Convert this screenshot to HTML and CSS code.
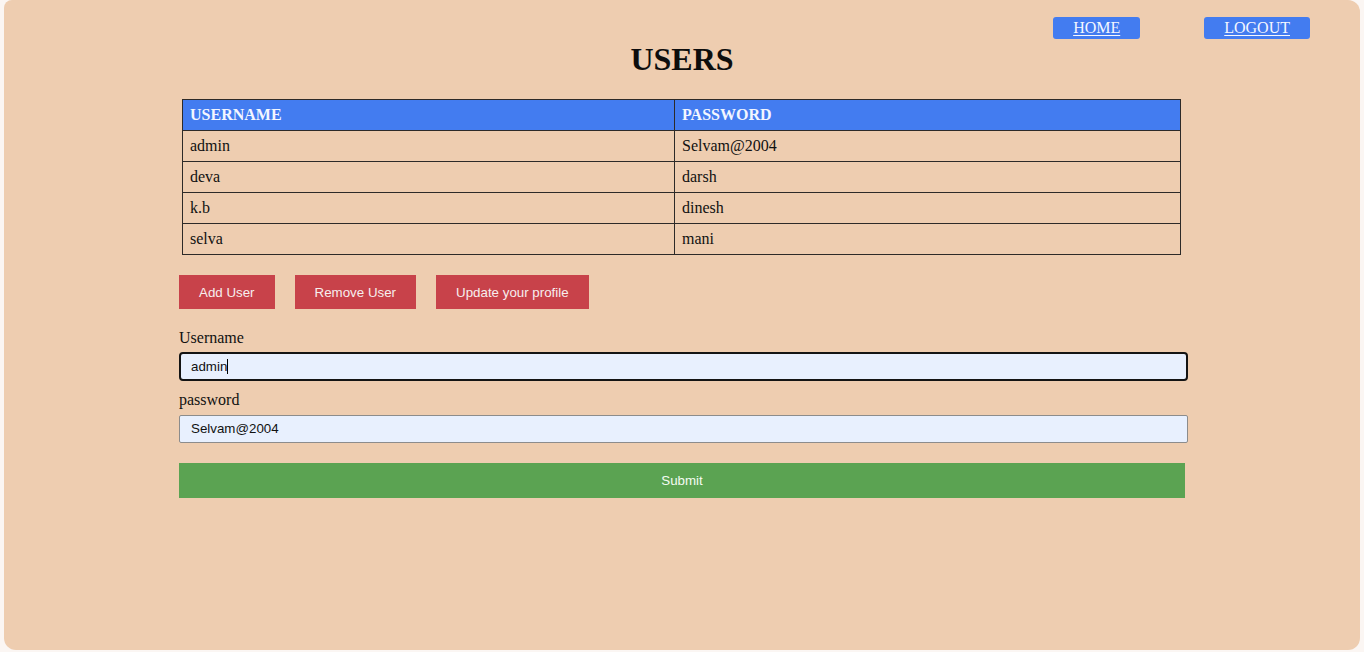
FILE: index.html
```html
<!DOCTYPE html>
<html>
<head>
<meta charset="utf-8">
<link rel="stylesheet" href="styles.css">
</head>
<body>
<div class="panel">
  <nav class="nav">
    <a class="nav-btn" href="#">HOME</a>
    <a class="nav-btn" href="#">LOGOUT</a>
  </nav>
  <h1 class="title">USERS</h1>
  <table class="users">
    <thead>
      <tr><th class="col-user">USERNAME</th><th>PASSWORD</th></tr>
    </thead>
    <tbody>
      <tr><td>admin</td><td>Selvam@2004</td></tr>
      <tr><td>deva</td><td>darsh</td></tr>
      <tr><td>k.b</td><td>dinesh</td></tr>
      <tr><td>selva</td><td>mani</td></tr>
    </tbody>
  </table>
  <div class="form-area">
    <div class="actions">
      <button class="act-btn">Add User</button>
      <button class="act-btn">Remove User</button>
      <button class="act-btn">Update your profile</button>
    </div>
    <label class="lbl lbl-first">Username</label>
    <div class="field focused">admin<span class="caret"></span></div>
    <label class="lbl">password</label>
    <div class="field">Selvam@2004</div>
    <button class="submit">Submit</button>
  </div>
</div>
</body>
</html>
```

FILE: styles.css
```css
html, body {
  margin: 0;
  padding: 0;
  background: #fbf6f3;
}
body {
  width: 1364px;
  height: 652px;
  overflow: hidden;
}
.panel {
  margin: 0 4px;
  height: 650px;
  background: #eecdb0;
  border-radius: 0 0 12px 12px;
  border-top-left-radius: 8px;
  border-top-right-radius: 12px;
  font-family: "Liberation Serif", "Times New Roman", serif;
  color: #111;
  box-sizing: border-box;
  padding-top: 17px;
  overflow: hidden;
}
.nav {
  display: flex;
  justify-content: flex-end;
  gap: 64px;
  padding-right: 50px;
}
.nav-btn {
  display: block;
  height: 22px;
  line-height: 22px;
  padding: 0 20px;
  background: #437cf0;
  color: #f4f7ff;
  font-size: 16px;
  border-radius: 3px;
  text-decoration: underline;
  text-underline-offset: 2px;
}
.title {
  margin: 2px 0 0;
  font-size: 32px;
  line-height: 37px;
  text-align: center;
  font-weight: bold;
  color: #0d0d0d;
}
.users {
  border-collapse: collapse;
  width: 999px;
  margin: 21px 0 0 178px;
  font-size: 16px;
  line-height: 18px;
}
.users th, .users td {
  border: 1px solid #2d2a28;
  padding: 6px 7px;
  text-align: left;
}
.users th {
  background: #437cf0;
  color: #f3f6ff;
  font-weight: bold;
}
.col-user {
  width: 477px;
}
.form-area {
  margin-left: 175px;
  width: 1009px;
  display: flex;
  flex-direction: column;
  align-items: flex-start;
  padding-top: 20px;
}
.actions {
  display: flex;
  gap: 20px;
}
.act-btn {
  background: #c8424a;
  color: #f7eeee;
  border: none;
  height: 34px;
  padding: 0 20px;
  font-family: "Liberation Sans", Arial, sans-serif;
  font-size: 13.333px;
}
.lbl {
  font-size: 16px;
  line-height: 18px;
  margin: 10px 0 6px;
}
.lbl-first {
  margin-top: 20px;
  margin-bottom: 5px;
}
.field {
  box-sizing: border-box;
  width: 1009px;
  height: 28px;
  line-height: 26px;
  background: #e8f0fe;
  border: 1px solid #8c8c8c;
  border-radius: 2px;
  padding: 0 11px;
  font-family: "Liberation Sans", Arial, sans-serif;
  font-size: 13.333px;
  color: #111;
}
.field.focused {
  height: 29px;
  border: 2px solid #141414;
  border-radius: 4px;
  padding: 0 10px;
  line-height: 25px;
}
.caret {
  display: inline-block;
  width: 1px;
  height: 15px;
  background: #000;
  vertical-align: -3px;
}
.submit {
  margin-top: 20px;
  width: 1006px;
  height: 35px;
  background: #5ba352;
  color: #f4fbf2;
  border: none;
  font-family: "Liberation Sans", Arial, sans-serif;
  font-size: 13.333px;
}
```
